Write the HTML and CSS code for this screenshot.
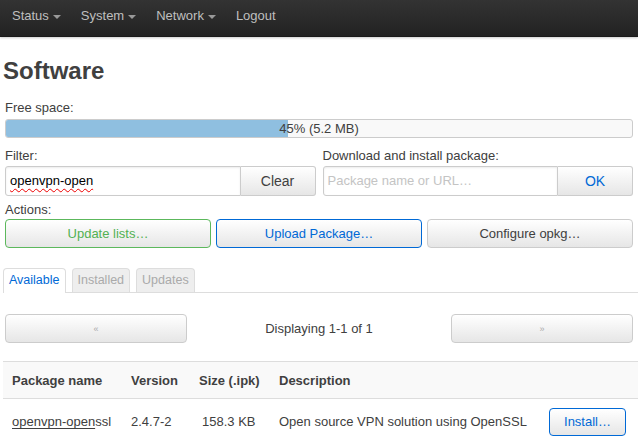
FILE: index.html
```html
<!DOCTYPE html>
<html>
<head>
<meta charset="utf-8">
<link rel="stylesheet" href="styles.css">
</head>
<body>
<header class="navbar">
  <ul class="nav">
    <li>Status <span class="caret"></span></li>
    <li>System <span class="caret"></span></li>
    <li>Network <span class="caret"></span></li>
    <li>Logout</li>
  </ul>
</header>
<main class="main">
  <h2 class="title">Software</h2>
  <div class="field">
    <label class="lbl lbl-free">Free space:</label>
    <div class="progress"><div class="fill" style="width:45%"></div><span class="ptext">45% (5.2 MB)</span></div>
  </div>
  <div class="row2">
    <div class="field half">
      <label class="lbl lbl-row">Filter:</label>
      <div class="group">
        <div class="input"><span class="spell">openvpn-open</span></div>
        <button class="btn addon">Clear</button>
      </div>
    </div>
    <div class="field half">
      <label class="lbl lbl-row">Download and install package:</label>
      <div class="group">
        <div class="input placeholder">Package name or URL…</div>
        <button class="btn addon blue-text">OK</button>
      </div>
    </div>
  </div>
  <div class="field">
    <label class="lbl lbl-act">Actions:</label>
    <div class="actions">
      <button class="btn green">Update lists…</button>
      <button class="btn blue">Upload Package…</button>
      <button class="btn">Configure opkg…</button>
    </div>
  </div>
  <ul class="tabs">
    <li class="tab active">Available</li>
    <li class="tab">Installed</li>
    <li class="tab">Updates</li>
  </ul>
  <div class="pager">
    <button class="btn pbtn">«</button>
    <span class="pinfo">Displaying 1-1 of 1</span>
    <button class="btn pbtn">»</button>
  </div>
  <table class="tbl">
    <thead>
      <tr><th class="c1">Package name</th><th class="c2">Version</th><th class="c3">Size (.ipk)</th><th class="c4">Description</th><th class="c5"></th></tr>
    </thead>
    <tbody>
      <tr><td class="c1"><span class="u">openvpn-open</span>ssl</td><td class="c2">2.4.7-2</td><td class="c3 r">158.3 KB</td><td class="c4">Open source VPN solution using OpenSSL</td><td class="c5"><button class="btn blue ibtn">Install…</button></td></tr>
    </tbody>
  </table>
</main>
</body>
</html>
```

FILE: styles.css
```css
* { box-sizing: border-box; }
html, body { margin: 0; padding: 0; }
body {
  font-family: "Liberation Sans", Arial, sans-serif;
  font-size: 13px;
  color: #404040;
  background: #fff;
  width: 638px;
  height: 446px;
  overflow: hidden;
}
.navbar {
  height: 37px;
  background: linear-gradient(#333, #222);
  border-bottom: 1px solid #1a1a1a;
  box-shadow: 0 1px 2px rgba(0,0,0,0.2);
}
.nav {
  list-style: none;
  margin: 0;
  padding: 0 0 0 2px;
  display: flex;
}
.nav li {
  color: #bfbfbf;
  padding: 0 10px;
  line-height: 32px;
  font-size: 13px;
  display: flex;
  align-items: center;
}
.caret {
  display: inline-block;
  width: 0; height: 0;
  margin-left: 4px;
  margin-top: 2px;
  border-left: 4px solid transparent;
  border-right: 4px solid transparent;
  border-top: 4px solid #999;
}
.main { padding: 0 5px; }
.title {
  font-size: 24px;
  font-weight: bold;
  margin: 22px 0 0 -2px;
  line-height: 24px;
  color: #404040;
}
.field { display: flex; flex-direction: column; }
.lbl { line-height: 18px; }
.lbl-free { margin-top: 16px; margin-bottom: 2px; }
.lbl-row { margin-top: 9px; margin-bottom: 1px; }
.lbl-act { margin-top: 5px; margin-bottom: 0; }
.progress {
  position: relative;
  height: 19px;
  border: 1px solid #ccc;
  border-radius: 3px;
  background: #f9f9f9;
  overflow: hidden;
}
.fill { height: 100%; background: #8fbfe0; }
.ptext {
  position: absolute;
  left: 0; right: 0; top: 0;
  text-align: center;
  line-height: 17px;
  color: #404040;
}
.row2 { display: flex; gap: 7px; }
.half { flex: 1; }
.group { display: flex; height: 30px; }
.input {
  flex: 1;
  border: 1px solid #ccc;
  border-radius: 3px 0 0 3px;
  padding: 0 4px;
  line-height: 28px;
  color: #000;
  box-shadow: inset 0 1px 2px rgba(0,0,0,0.08);
}
.spell { text-decoration: underline wavy #e00; text-underline-offset: 3px; text-decoration-thickness: 1px; }
.placeholder { color: #c4c4c4; }
.btn {
  font-family: "Liberation Sans", Arial, sans-serif;
  font-size: 13px;
  color: #404040;
  background: linear-gradient(#fff, #e6e6e6);
  border: 1px solid #ccc;
  border-radius: 4px;
  padding: 0;
  cursor: pointer;
}
.addon {
  width: 75px;
  border-radius: 0 3px 3px 0;
  border-left: none;
  font-size: 14px;
}
.blue-text { color: #0069d6; }
.actions { display: flex; gap: 5px; height: 29px; }
.actions .btn { flex: 1; }
.green { border-color: #5cb85c; color: #52b152; }
.blue { border-color: #0069d6; color: #0069d6; }
.tabs {
  list-style: none;
  margin: 20px -5px 0 -2px;
  padding: 0;
  display: flex;
  gap: 6px;
  border-bottom: 1px solid #ddd;
  height: 25px;
}
.tab {
  height: 24px;
  padding: 0 5px;
  line-height: 22px;
  font-size: 12.5px;
  border: 1px solid #ddd;
  border-bottom: none;
  border-radius: 4px 4px 0 0;
  background: #eee;
  color: #aaa;
}
.tab.active { background: #fff; color: #0069d6; height: 25px; }
.pager {
  display: flex;
  align-items: center;
  margin-top: 21px;
  height: 29px;
}
.pbtn { width: 182px; height: 29px; font-size: 9px; color: #aaa; }
.pinfo { flex: 1; text-align: center; }
.tbl {
  width: calc(100% + 7px);
  margin: 18px -5px 0 -2px;
  border-collapse: collapse;
}
.tbl th {
  background: #f9f9f9;
  border-top: 1px solid #ddd;
  border-bottom: 1px solid #ddd;
  text-align: left;
  font-weight: bold;
  height: 37px;
  padding: 0;
}
.tbl td { height: 46px; padding: 0; }
.c1 { padding-left: 9px !important; width: 128px; }
.c2 { width: 68px; }
.c3 { width: 80px; }
.r { text-align: left; padding-left: 3px !important; }
.c5 { text-align: right; padding-right: 12px !important; }
.u { text-decoration: underline; text-underline-offset: 2px; }
.ibtn { width: 77px; height: 28px; }
```
